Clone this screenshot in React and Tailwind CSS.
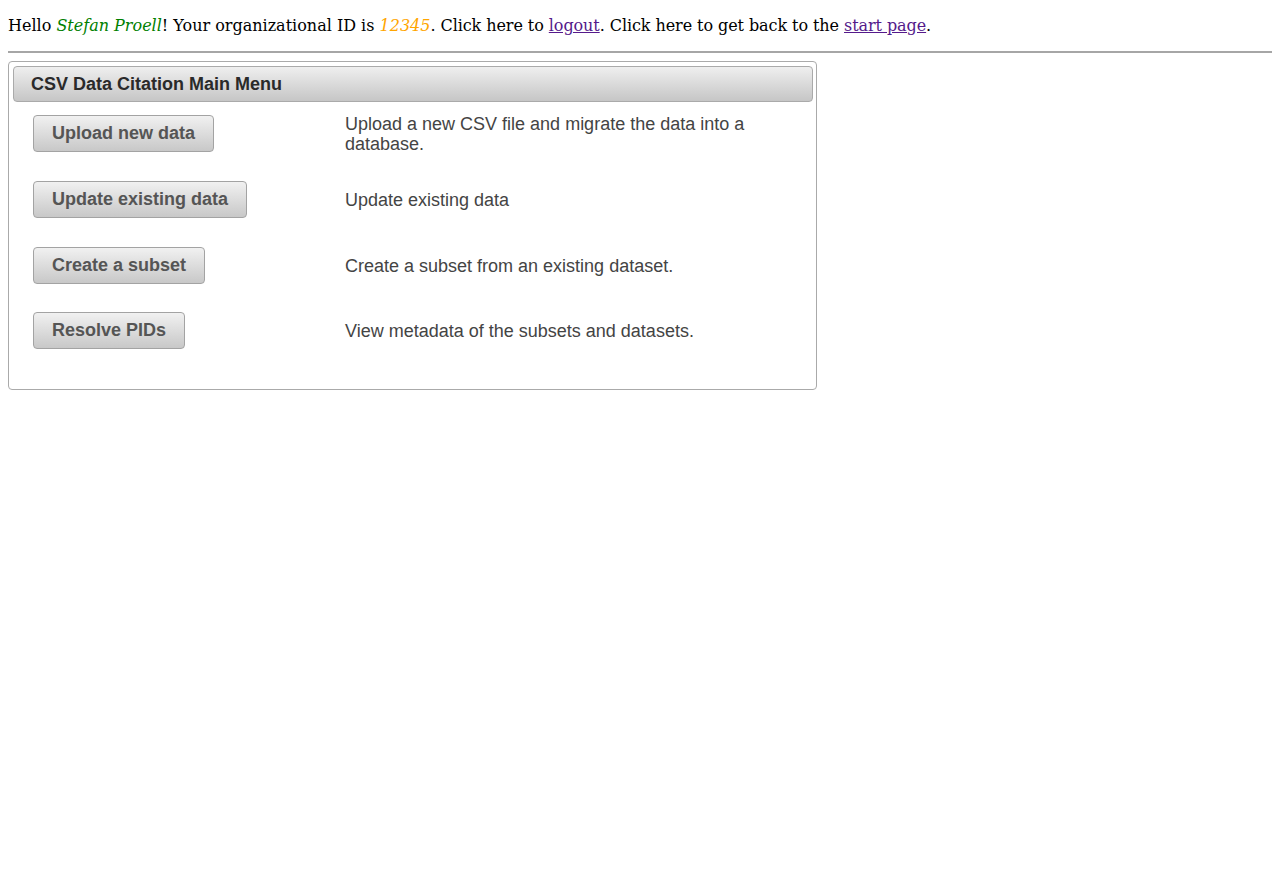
export default function App() {
  const rows = [
    ["Upload new data", "Upload a new CSV file and migrate the data into a database."],
    ["Update existing data", "Update existing data"],
    ["Create a subset", "Create a subset from an existing dataset."],
    ["Resolve PIDs", "View metadata of the subsets and datasets."],
  ];

  return (
    <div className="min-h-screen bg-white px-2 pb-2 text-black font-['DejaVu_Serif',serif] text-[16px]">
      <p className="pt-4 leading-[19px]">
        Hello <i className="text-[#008000]">Stefan Proell</i>! Your organizational ID is{" "}
        <i className="text-[#ffa500]">12345</i>
        <span className="tracking-[-0.075px]">
          . Click here to <a href="#" className="text-[#551a8b] underline">logout</a>. Click here to get back to the{" "}
          <a href="#" className="text-[#551a8b] underline">start page</a>.
        </span>
      </p>
      <div className="mt-4 h-[2px] bg-[#a6a6a6]" />

      <div className="mt-2 w-[809px] rounded-[4px] border border-[#aaaaaa] py-1 pl-1 pr-[3px] font-['Liberation_Sans',Arial,sans-serif]">
        <div className="flex h-[36px] items-center rounded-[4px] border border-[#aaaaaa] bg-gradient-to-b from-[#efefef] to-[#c6c6c6] pt-[1px] pl-[17px] text-[18px] font-bold text-[#2a2a2a]">
          CSV Data Citation Main Menu
        </div>

        <div className="flex flex-col gap-[29px] pl-[20px] pt-[13px] pb-[36px]">
          {rows.map(([label, desc], i) => (
            <div key={label} className={`flex h-[37px] items-center ${i === 3 ? "-mt-[1px]" : ""}`}>
              <div className="w-[312px] shrink-0">
                <button className="h-[37px] rounded-[4px] border border-[#a3a3a3] bg-gradient-to-b from-[#f1f1f1] to-[#c8c8c8] px-[18px] text-[18px] font-bold text-[#555555]">
                  {label}
                </button>
              </div>
              <div className="w-[450px] text-[18px] leading-[20px] text-[#444444]">{desc}</div>
            </div>
          ))}
        </div>
      </div>
    </div>
  );
}
